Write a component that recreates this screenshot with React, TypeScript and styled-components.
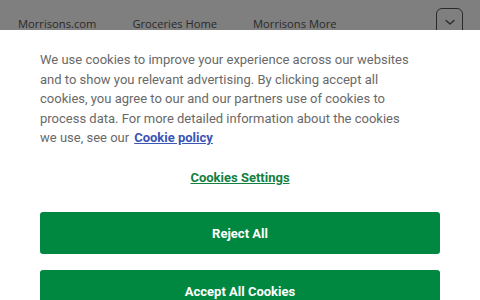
import React from "react";
import styled, { createGlobalStyle } from "styled-components";

const Global = createGlobalStyle`
  html, body { margin: 0; padding: 0; background: #fff; }
  body { width: 480px; height: 300px; overflow: hidden; }
  * { box-sizing: border-box; }
`;

const Page = styled.div`
  position: relative;
  width: 480px;
  height: 300px;
  overflow: hidden;
  background: #fff;
`;

const TopNav = styled.nav`
  display: flex;
  align-items: flex-start;
  height: 44px;
  padding: 8px 17px 0 18px;
`;

const NavLinks = styled.div`
  display: flex;
  gap: 36px;
  flex: 1;
  padding-top: 7px;
`;

const NavLink = styled.a`
  font-family: "Open Sans", "Liberation Sans", sans-serif;
  font-size: 11.2px;
  line-height: 18px;
  color: #555;
  text-decoration: none;
`;

const MenuButton = styled.button`
  display: flex;
  align-items: center;
  justify-content: center;
  width: 27px;
  height: 28px;
  padding: 0;
  border: 1px solid #555;
  border-radius: 6px;
  background: #fff;
  color: #555;
`;

const Dim = styled.div`
  position: absolute;
  inset: 0;
  background: rgba(0, 0, 0, 0.5);
`;

const Banner = styled.div`
  position: absolute;
  top: 30px;
  left: 0;
  right: 0;
  bottom: 0;
  background: #fff;
  display: flex;
  flex-direction: column;
  padding: 20px 40px 0;
`;

const Text = styled.p`
  margin: 0;
  width: 372px;
  font-family: Roboto, "Liberation Sans", sans-serif;
  font-size: 13px;
  line-height: 19.5px;
  color: #696969;
`;

const PolicyLink = styled.a`
  margin-left: 5px;
  font-weight: 700;
  color: #3a55b5;
  text-decoration: underline;
`;

const SettingsLink = styled.a`
  align-self: center;
  margin-top: 20px;
  font-family: Roboto, "Liberation Sans", sans-serif;
  font-size: 13px;
  line-height: 19.5px;
  font-weight: 700;
  color: #13803f;
  text-decoration: underline;
`;

const Actions = styled.div`
  display: flex;
  flex-direction: column;
  gap: 16px;
  margin-top: 25px;
`;

const ActionButton = styled.button`
  height: 42px;
  width: 100%;
  border: none;
  border-radius: 3px;
  background: #008840;
  color: #fff;
  font-family: Roboto, "Liberation Sans", sans-serif;
  font-size: 13px;
  font-weight: 700;
`;

export default function App() {
  return (
    <Page>
      <Global />
      <TopNav>
        <NavLinks>
          <NavLink>Morrisons.com</NavLink>
          <NavLink>Groceries Home</NavLink>
          <NavLink>Morrisons More</NavLink>
        </NavLinks>
        <MenuButton aria-label="More">
          <svg width="12" height="8" viewBox="0 0 12 8" fill="none">
            <path d="M2 2.5 6 6l4-3.5" stroke="currentColor" strokeWidth="1.4" strokeLinecap="round" strokeLinejoin="round" />
          </svg>
        </MenuButton>
      </TopNav>
      <Dim />
      <Banner>
        <Text>
          We use cookies to improve your experience across our websites and to show you relevant
          advertising. By clicking accept all cookies, you agree to our and our partners use of
          cookies to process data. For more detailed information about the cookies we use, see our
          <PolicyLink>Cookie policy</PolicyLink>
        </Text>
        <SettingsLink>Cookies Settings</SettingsLink>
        <Actions>
          <ActionButton>Reject All</ActionButton>
          <ActionButton>Accept All Cookies</ActionButton>
        </Actions>
      </Banner>
    </Page>
  );
}
